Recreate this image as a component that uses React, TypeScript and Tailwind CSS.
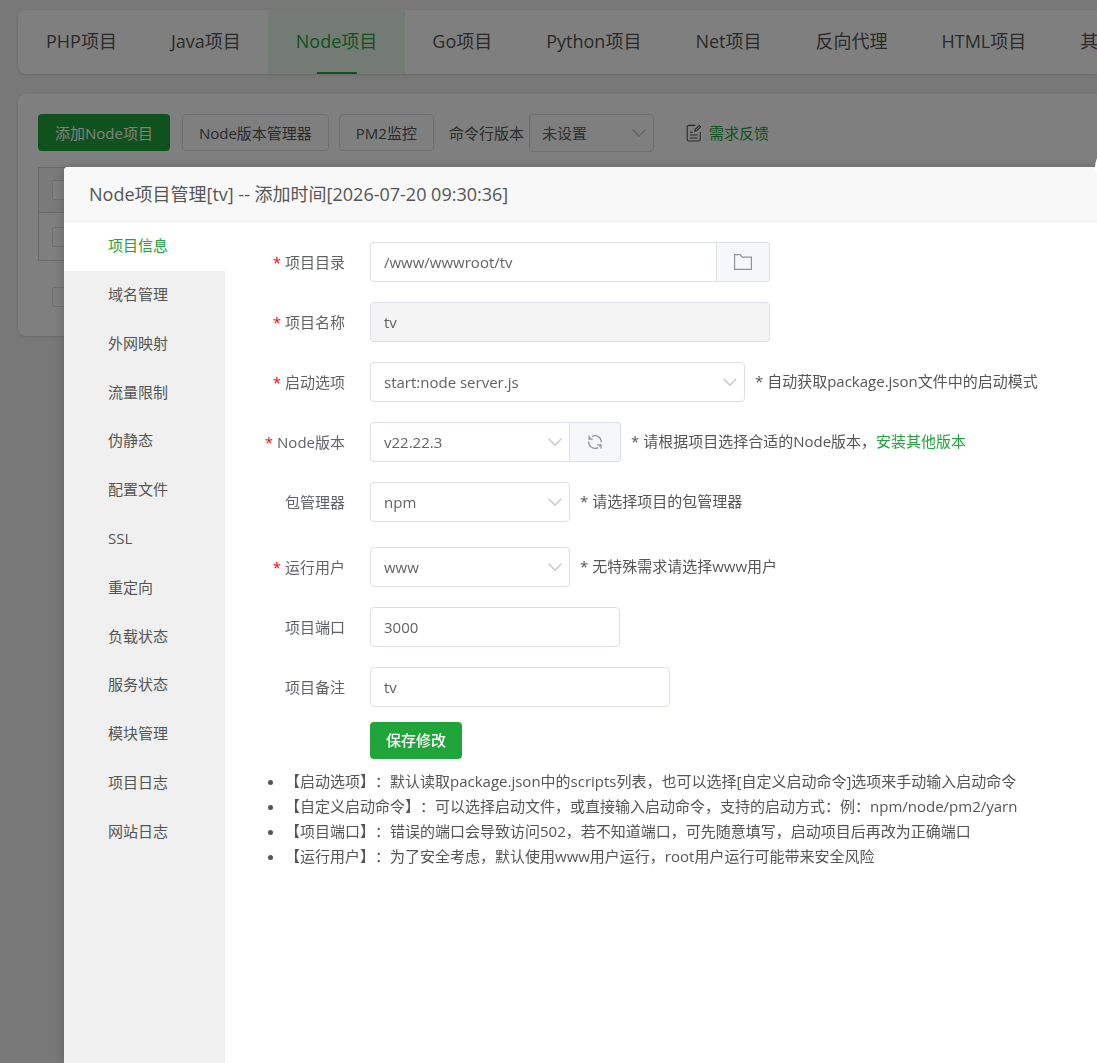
import type { ReactNode } from "react";

const projectTabs = [
  "PHP项目",
  "Java项目",
  "Node项目",
  "Go项目",
  "Python项目",
  "Net项目",
  "反向代理",
  "HTML项目",
  "其他项目",
];

const menuItems = [
  "项目信息",
  "域名管理",
  "外网映射",
  "流量限制",
  "伪静态",
  "配置文件",
  "SSL",
  "重定向",
  "负载状态",
  "服务状态",
  "模块管理",
  "项目日志",
  "网站日志",
];

const tips = [
  "【启动选项】：默认读取package.json中的scripts列表，也可以选择[自定义启动命令]选项来手动输入启动命令",
  "【自定义启动命令】：可以选择启动文件，或直接输入启动命令，支持的启动方式：例：npm/node/pm2/yarn",
  "【项目端口】：错误的端口会导致访问502，若不知道端口，可先随意填写，启动项目后再改为正确端口",
  "【运行用户】：为了安全考虑，默认使用www用户运行，root用户运行可能带来安全风险",
];

const inputClass =
  "h-10 rounded border border-[#dcdfe6] bg-white px-[13px] text-[#606266] outline-none focus:border-[#20a53a]";

function Chevron() {
  return (
    <svg
      viewBox="0 0 14 8"
      className="pointer-events-none absolute right-2 top-1/2 h-2 w-[14px] -translate-y-1/2"
      fill="none"
      stroke="#c0c4cc"
      strokeWidth="1.3"
    >
      <path d="M0.7 0.7 7 7.2l6.3-6.5" />
    </svg>
  );
}

function FolderIcon() {
  return (
    <svg viewBox="0 0 20 18" className="h-[18px] w-5" fill="none" stroke="#909399" strokeWidth="1.2">
      <path d="M1.6 1.6h5.6l2 2.6h9.2v12.2H1.6z" />
    </svg>
  );
}

function RefreshIcon() {
  return (
    <svg viewBox="0 0 16 16" className="h-4 w-4" fill="none" stroke="#909399" strokeWidth="1.2">
      <path d="M5 2.4A6.3 6.3 0 0 1 14.3 8.4" />
      <path d="M11 13.6A6.3 6.3 0 0 1 1.7 7.6" />
      <path d="M2 1.6v3.6h3.8M14 14.4v-3.6h-3.8" />
      <path d="M2.2 5.2 3.6 3.4M13.8 10.8l-1.4 1.8" />
    </svg>
  );
}

function FeedbackIcon() {
  return (
    <svg viewBox="0 0 16 18" className="h-[18px] w-4" fill="none" stroke="#555555" strokeWidth="1.1">
      <path d="M9.4 1.4H2.8A1.6 1.6 0 0 0 1.2 3v12.4A1.6 1.6 0 0 0 2.8 17h9.8a1.6 1.6 0 0 0 1.6-1.6V8" />
      <path d="M4 8.2h3M4 11h7.6M4 14h7.6" />
      <path d="M8.8 7.2 9.2 5.4l4.2-4 1.3 1.3-4.2 4.1z" />
    </svg>
  );
}

type SelectProps = {
  id: string;
  value: string;
  className: string;
};

function Select({ id, value, className }: SelectProps) {
  return (
    <div className="relative">
      <select
        id={id}
        className={`block appearance-none border border-[#dcdfe6] bg-white text-[#606266] outline-none ${className}`}
      >
        <option>{value}</option>
      </select>
      <Chevron />
    </div>
  );
}

type FieldProps = {
  id: string;
  label: string;
  required?: boolean;
  hint?: ReactNode;
  children: ReactNode;
};

function Field({ id, label, required, hint, children }: FieldProps) {
  return (
    <div className="flex items-center">
      <label htmlFor={id} className="w-[145px] shrink-0 pr-[25px] text-right text-[#606266]">
        {required && <span className="mr-1 text-[#ff0000]">*</span>}
        {label}
      </label>
      {children}
      {hint && <p className="ml-[10px] whitespace-nowrap pb-[2px]">{hint}</p>}
    </div>
  );
}

function Checkbox({ label }: { label: string }) {
  return (
    <input
      type="checkbox"
      aria-label={label}
      className="block h-5 w-5 appearance-none rounded-xs border border-[#dcdfe6] bg-white"
    />
  );
}

function ProjectPage() {
  return (
    <div className="pl-[18px] pt-[10px]">
      <nav className="flex h-16 overflow-hidden whitespace-nowrap rounded-l-lg bg-white pl-px text-lg shadow-sm">
        {projectTabs.map((tab) => (
          <a
            key={tab}
            href="#"
            className={
              tab === "Node项目"
                ? "relative flex shrink-0 items-center bg-[#e9f6eb] px-7 pb-[2px] text-[#20a53a]"
                : "flex shrink-0 items-center px-[27px] pb-[2px]"
            }
          >
            {tab}
            {tab === "Node项目" && (
              <span className="absolute bottom-0 left-1/2 h-[2px] w-10 -translate-x-1/2 bg-[#20a53a]" />
            )}
          </a>
        ))}
      </nav>

      <section className="mt-5 rounded-l-lg bg-white pb-[29px] pl-5 pt-5 shadow-sm">
        <div className="flex h-[38px] items-start whitespace-nowrap">
          <button className="h-[37px] rounded bg-[#20a53a] px-[17px] text-white">添加Node项目</button>
          <button className="ml-3 h-[37px] rounded border border-[#dcdfe6] px-4">
            Node版本管理器
          </button>
          <button className="ml-[10px] h-[37px] rounded border border-[#dcdfe6] px-4">
            PM2监控
          </button>
          <label htmlFor="cli-version" className="ml-[15px] mr-[5px] leading-[38px]">
            命令行版本
          </label>
          <Select id="cli-version" value="未设置" className="h-[38px] w-[125px] rounded px-3" />
          <a href="#" className="ml-8 flex h-[37px] items-center gap-[7px] text-[#20a53a]">
            <FeedbackIcon />
            需求反馈
          </a>
        </div>

        <table className="mt-[15px] w-full border border-[#d4d4d4] text-left">
          <thead>
            <tr className="h-[45px] border-b border-[#d4d4d4] bg-[#f5f5f5]">
              <th className="pl-[13px]">
                <Checkbox label="全选" />
              </th>
            </tr>
          </thead>
          <tbody>
            <tr className="h-12">
              <td className="pl-[13px]">
                <Checkbox label="tv" />
              </td>
            </tr>
          </tbody>
        </table>
        <div className="mt-[26px] pl-[14px]">
          <Checkbox label="批量操作" />
        </div>
      </section>
    </div>
  );
}

function ProjectForm() {
  return (
    <form className="min-w-0 flex-1 overflow-hidden pt-5" onSubmit={(e) => e.preventDefault()}>
      <div className="flex flex-col gap-5">
        <Field id="path" label="项目目录" required>
          <input id="path" defaultValue="/www/wwwroot/tv" className={`${inputClass} w-[347px] rounded-r-none`} />
          <button
            type="button"
            aria-label="选择目录"
            className="flex h-10 w-[53px] items-center justify-center rounded-r border border-l-0 border-[#dcdfe6] bg-[#f5f7fa]"
          >
            <FolderIcon />
          </button>
        </Field>
        <Field id="name" label="项目名称" required>
          <input
            id="name"
            defaultValue="tv"
            disabled
            className="h-10 w-[400px] rounded border border-[#dcdfe6] bg-[#f4f4f4] px-[13px] text-[#606266]"
          />
        </Field>
        <Field id="script" label="启动选项" required hint="* 自动获取package.json文件中的启动模式">
          <Select id="script" value="start:node server.js" className="h-10 w-[375px] rounded px-[13px]" />
        </Field>
        <Field
          id="version"
          label="Node版本"
          required
          hint={
            <>
              * 请根据项目选择合适的Node版本，
              <a href="#" className="text-[#20a53a]">
                安装其他版本
              </a>
            </>
          }
        >
          <Select id="version" value="v22.22.3" className="h-10 w-[200px] rounded-l px-[13px]" />
          <button
            type="button"
            aria-label="刷新版本"
            className="flex h-10 w-[51px] items-center justify-center rounded-r border border-l-0 border-[#dcdfe6] bg-[#f5f7fa]"
          >
            <RefreshIcon />
          </button>
        </Field>
        <Field id="manager" label="包管理器" hint="* 请选择项目的包管理器">
          <Select id="manager" value="npm" className="h-10 w-[200px] rounded px-[13px]" />
        </Field>
      </div>

      <div className="mt-[25px] flex flex-col gap-5">
        <Field id="user" label="运行用户" required hint="* 无特殊需求请选择www用户">
          <Select id="user" value="www" className="h-10 w-[200px] rounded px-[13px]" />
        </Field>
        <Field id="port" label="项目端口">
          <input id="port" defaultValue="3000" className={`${inputClass} w-[250px]`} />
        </Field>
        <Field id="remark" label="项目备注">
          <input id="remark" defaultValue="tv" className={`${inputClass} w-[300px]`} />
        </Field>
      </div>

      <button className="ml-[145px] mt-[15px] block h-[37px] rounded bg-[#20a53a] px-4 pb-[2px] font-medium text-white">
        保存修改
      </button>

      <ul className="mt-[10px] list-disc whitespace-nowrap pl-[60px] leading-[25px] [text-spacing-trim:space-all]">
        {tips.map((tip) => (
          <li key={tip}>{tip}</li>
        ))}
      </ul>
    </form>
  );
}

function ProjectDialog() {
  return (
    <div
      role="dialog"
      aria-labelledby="dialog-title"
      className="relative ml-16 mt-[167px] flex flex-1 flex-col rounded-tl bg-white shadow-[0_0_12px_rgba(0,0,0,0.2)]"
    >
      <header className="flex h-[55px] shrink-0 items-center rounded-tl border-b border-[#eeeeee] bg-[#f8f8f8] pl-[25px]">
        <h1 id="dialog-title" className="text-lg">
          Node项目管理[tv] -- 添加时间[2026-07-20 09:30:36]
        </h1>
      </header>
      <button
        aria-label="关闭"
        className="absolute -right-9 -top-[19px] h-[38px] w-[38px] rounded-full bg-white"
      />
      <div className="flex flex-1">
        <aside className="w-[161px] shrink-0 bg-[#f0f0f0]">
          <nav className="flex h-[634px] flex-col">
            {menuItems.map((item, index) => (
              <a
                key={item}
                href="#"
                className={
                  index === 0
                    ? "flex flex-1 items-center bg-white pb-[2px] pl-11 text-[#20a53a]"
                    : "flex flex-1 items-center pb-[2px] pl-11"
                }
              >
                {item}
              </a>
            ))}
          </nav>
        </aside>
        <ProjectForm />
      </div>
    </div>
  );
}

export default function App() {
  return (
    <div className="min-h-screen bg-[#f0f0f0] font-['Open_Sans','Noto_Sans_CJK_SC',sans-serif] text-[15px] leading-5 text-[#555555]">
      <ProjectPage />
      <div className="fixed inset-0 flex overflow-hidden bg-black/50">
        <ProjectDialog />
      </div>
    </div>
  );
}
